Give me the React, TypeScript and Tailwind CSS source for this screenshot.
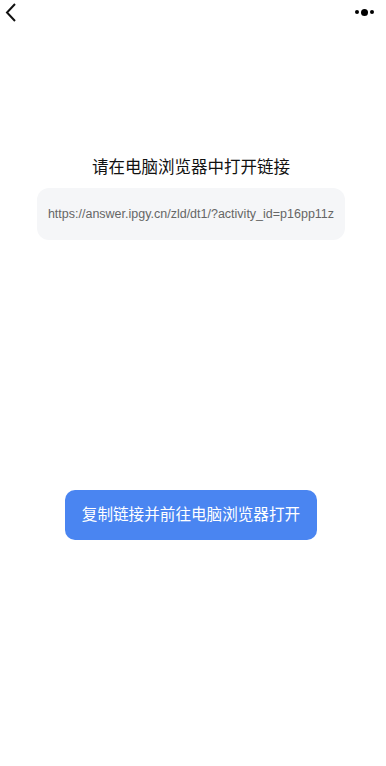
export default function App() {
  const url = "https://answer.ipgy.cn/zld/dt1/?activity_id=p16pp11z";
  return (
    <div
      className="relative w-[386px] h-[766px] bg-white overflow-hidden"
      style={{ fontFamily: '"Liberation Sans", "Noto Sans CJK SC", sans-serif' }}
    >
      {/* top bar */}
      <div className="flex items-center justify-between h-[24px] pl-[4px] pr-[12px]">
        <svg width="14" height="20" viewBox="0 0 14 20" fill="none">
          <path d="M11 2 L3 10.5 L11 19" stroke="#111" strokeWidth="2" />
        </svg>
        <div className="flex items-center gap-[2px]">
          <span className="w-[4px] h-[4px] rounded-full bg-black" />
          <span className="w-[7px] h-[7px] rounded-full bg-black" />
          <span className="w-[4px] h-[4px] rounded-full bg-black" />
        </div>
      </div>

      <div className="flex flex-col items-center pt-[131px] pr-[4px]">
        <div className="text-[16.5px] leading-[24px] text-[#111]">请在电脑浏览器中打开链接</div>
        <div className="mt-[9px] w-[308px] h-[52px] rounded-[12px] bg-[#f5f6f8] flex items-center justify-center">
          <span className="text-[12.5px] text-[#666]">{url}</span>
        </div>
        <button className="mt-[250px] w-[252px] h-[50px] rounded-[10px] bg-[#4a85f1] text-white text-[15.6px]">
          复制链接并前往电脑浏览器打开
        </button>
      </div>
    </div>
  );
}
